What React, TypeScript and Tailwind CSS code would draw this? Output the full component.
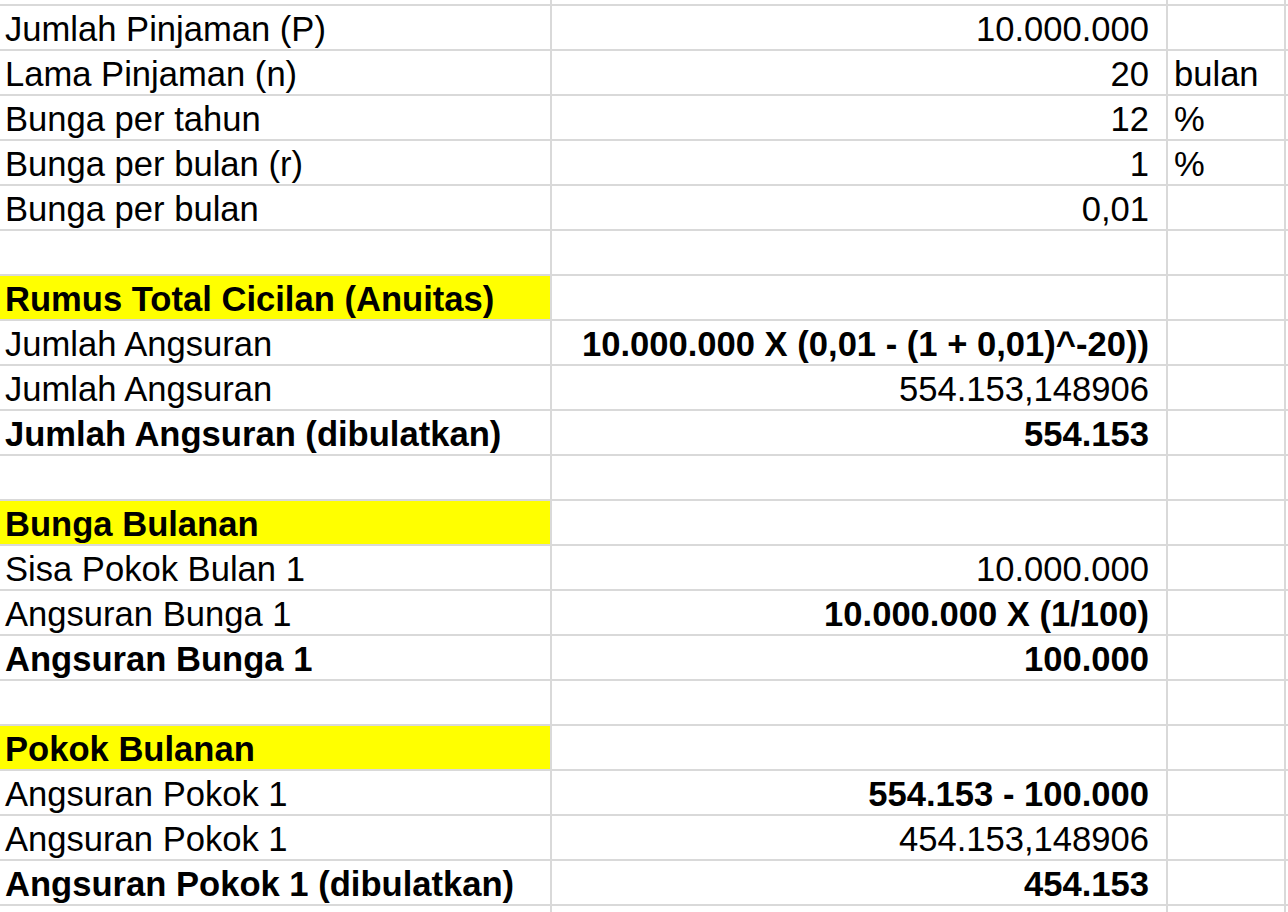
type Row = {
  label?: string;
  value?: string;
  unit?: string;
  boldLabel?: boolean;
  boldValue?: boolean;
  highlight?: boolean;
};

const rows: Row[] = [
  { label: "Jumlah Pinjaman (P)", value: "10.000.000" },
  { label: "Lama Pinjaman (n)", value: "20", unit: "bulan" },
  { label: "Bunga per tahun", value: "12", unit: "%" },
  { label: "Bunga per bulan (r)", value: "1", unit: "%" },
  { label: "Bunga per bulan", value: "0,01" },
  {},
  { label: "Rumus Total Cicilan (Anuitas)", boldLabel: true, highlight: true },
  { label: "Jumlah Angsuran", value: "10.000.000 X (0,01 - (1 + 0,01)^-20))", boldValue: true },
  { label: "Jumlah Angsuran", value: "554.153,148906" },
  { label: "Jumlah Angsuran (dibulatkan)", value: "554.153", boldLabel: true, boldValue: true },
  {},
  { label: "Bunga Bulanan", boldLabel: true, highlight: true },
  { label: "Sisa Pokok Bulan 1", value: "10.000.000" },
  { label: "Angsuran Bunga 1", value: "10.000.000 X (1/100)", boldValue: true },
  { label: "Angsuran Bunga 1", value: "100.000", boldLabel: true, boldValue: true },
  {},
  { label: "Pokok Bulanan", boldLabel: true, highlight: true },
  { label: "Angsuran Pokok 1", value: "554.153 - 100.000", boldValue: true },
  { label: "Angsuran Pokok 1", value: "454.153,148906" },
  { label: "Angsuran Pokok 1 (dibulatkan)", value: "454.153", boldLabel: true, boldValue: true },
];

// sheet cells: fixed row height, text sits a little low like in the spreadsheet
const cell = "whitespace-nowrap overflow-hidden pt-[2px] text-[34.6px] leading-[43px] text-black";

export default function App() {
  return (
    <div className="h-[912px] w-[1288px] overflow-hidden bg-[#d9d9d9] font-['Liberation_Sans',Arial,sans-serif]">
      <div className="grid grid-cols-[550px_614px_116px_2px] grid-rows-[4px_repeat(20,43px)_6px] gap-[2px]">
        <div className="bg-white" />
        <div className="bg-white" />
        <div className="bg-white" />
        <div className="bg-white" />
        {rows.map((r, i) => (
          <div key={i} className="contents">
            <div
              className={`${cell} pl-[5px] ${r.highlight ? "bg-[#ffff00]" : "bg-white"} ${
                r.boldLabel ? "font-bold" : ""
              }`}
            >
              {r.label}
            </div>
            <div className={`${cell} bg-white pr-[17px] text-right ${r.boldValue ? "font-bold" : ""}`}>
              {r.value}
            </div>
            <div className={`${cell} bg-white pl-[6px]`}>{r.unit}</div>
            <div className="bg-white" />
          </div>
        ))}
        <div className="bg-white" />
        <div className="bg-white" />
        <div className="bg-white" />
        <div className="bg-white" />
      </div>
    </div>
  );
}
